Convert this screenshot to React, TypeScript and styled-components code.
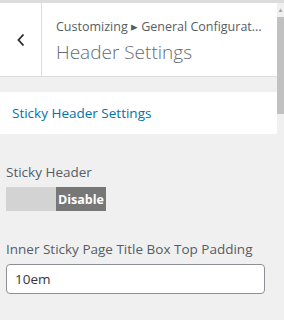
import React from "react";
import styled, { createGlobalStyle } from "styled-components";

const Global = createGlobalStyle`
  html, body { margin: 0; padding: 0; }
  body {
    background: #f0f0f0;
    font-family: "Open Sans", "Noto Sans", sans-serif;
    width: 284px; height: 320px; overflow: hidden;
  }
`;

const Frame = styled.div`
  display: flex;
  width: 284px;
  height: 320px;
  border-top: 3px solid #dcdcdc;
  box-sizing: border-box;
`;

const Panel = styled.div`
  flex: 1;
  display: flex;
  flex-direction: column;
  background: #f0f0f0;
  min-width: 0;
`;

const Header = styled.div`
  display: flex;
  height: 73px;
  background: #fff;
  border-bottom: 1px solid #dddddd;
`;

const Back = styled.div`
  width: 41px;
  border-right: 1px solid #dddddd;
  display: flex;
  align-items: center;
  justify-content: center;
  color: #23282d;
`;

const Titles = styled.div`
  flex: 1;
  padding: 15px 0 0 14px;
  min-width: 0;
`;

const Crumb = styled.div`
  font-size: 12.5px;
  color: #555d66;
  white-space: nowrap;
  line-height: 18px;
`;

const Title = styled.div`
  font-size: 19px;
  font-weight: 300;
  color: #656c74;
  line-height: 28px;
  margin-top: 2px;
`;

const Section = styled.div`
  margin-top: 15px;
  background: #fff;
  height: 42px;
  display: flex;
  align-items: center;
  padding-left: 12px;
  color: #0073aa;
  font-size: 13.5px;
  font-weight: 500;
`;

const Controls = styled.div`
  display: flex;
  flex-direction: column;
  padding: 28px 12px 0 6px;
`;

const Label = styled.div`
  font-size: 13.5px;
  color: #555d66;
  line-height: 20px;
  margin-bottom: 5px;
`;

const Toggle = styled.div`
  display: flex;
  width: 100px;
  height: 24px;
  margin-bottom: 28px;
`;

const Half = styled.div<{ $on?: boolean }>`
  flex: 1;
  background: ${(p) => (p.$on ? "#777777" : "#d3d3d3")};
  color: #fff;
  font-weight: 700;
  font-size: 12.5px;
  display: flex;
  align-items: center;
  justify-content: center;
`;

const Input = styled.div`
  box-sizing: border-box;
  height: 30px;
  border: 1px solid #8c8f94;
  border-radius: 4px;
  background: #fff;
  padding: 0 8px;
  display: flex;
  align-items: center;
  font-size: 13.5px;
  color: #32373c;
`;

const Scrollbar = styled.div`
  width: 7px;
  background: #f0f0f0;
  display: flex;
  flex-direction: column;
  align-items: center;
`;

const Arrow = styled.div`
  height: 14px;
  font-size: 6px;
  color: #a3a3a3;
  display: flex;
  align-items: center;
`;

const Thumb = styled.div`
  width: 7px;
  height: 97px;
  background: #c1c1c1;
`;

export default function App() {
  return (
    <>
      <Global />
      <Frame>
        <Panel>
          <Header>
            <Back>
              <svg width="12" height="16" viewBox="0 0 12 16">
                <path d="M8.5 2.5 L3.5 8 L8.5 13.5" fill="none" stroke="#23282d" strokeWidth="1.8" />
              </svg>
            </Back>
            <Titles>
              <Crumb>Customizing ▸ General Configurat...</Crumb>
              <Title>Header Settings</Title>
            </Titles>
          </Header>
          <Section>Sticky Header Settings</Section>
          <Controls>
            <Label>Sticky Header</Label>
            <Toggle>
              <Half />
              <Half $on>Disable</Half>
            </Toggle>
            <Label>Inner Sticky Page Title Box Top Padding</Label>
            <Input>10em</Input>
          </Controls>
        </Panel>
        <Scrollbar>
          <Arrow>▲</Arrow>
          <Thumb />
        </Scrollbar>
      </Frame>
    </>
  );
}
